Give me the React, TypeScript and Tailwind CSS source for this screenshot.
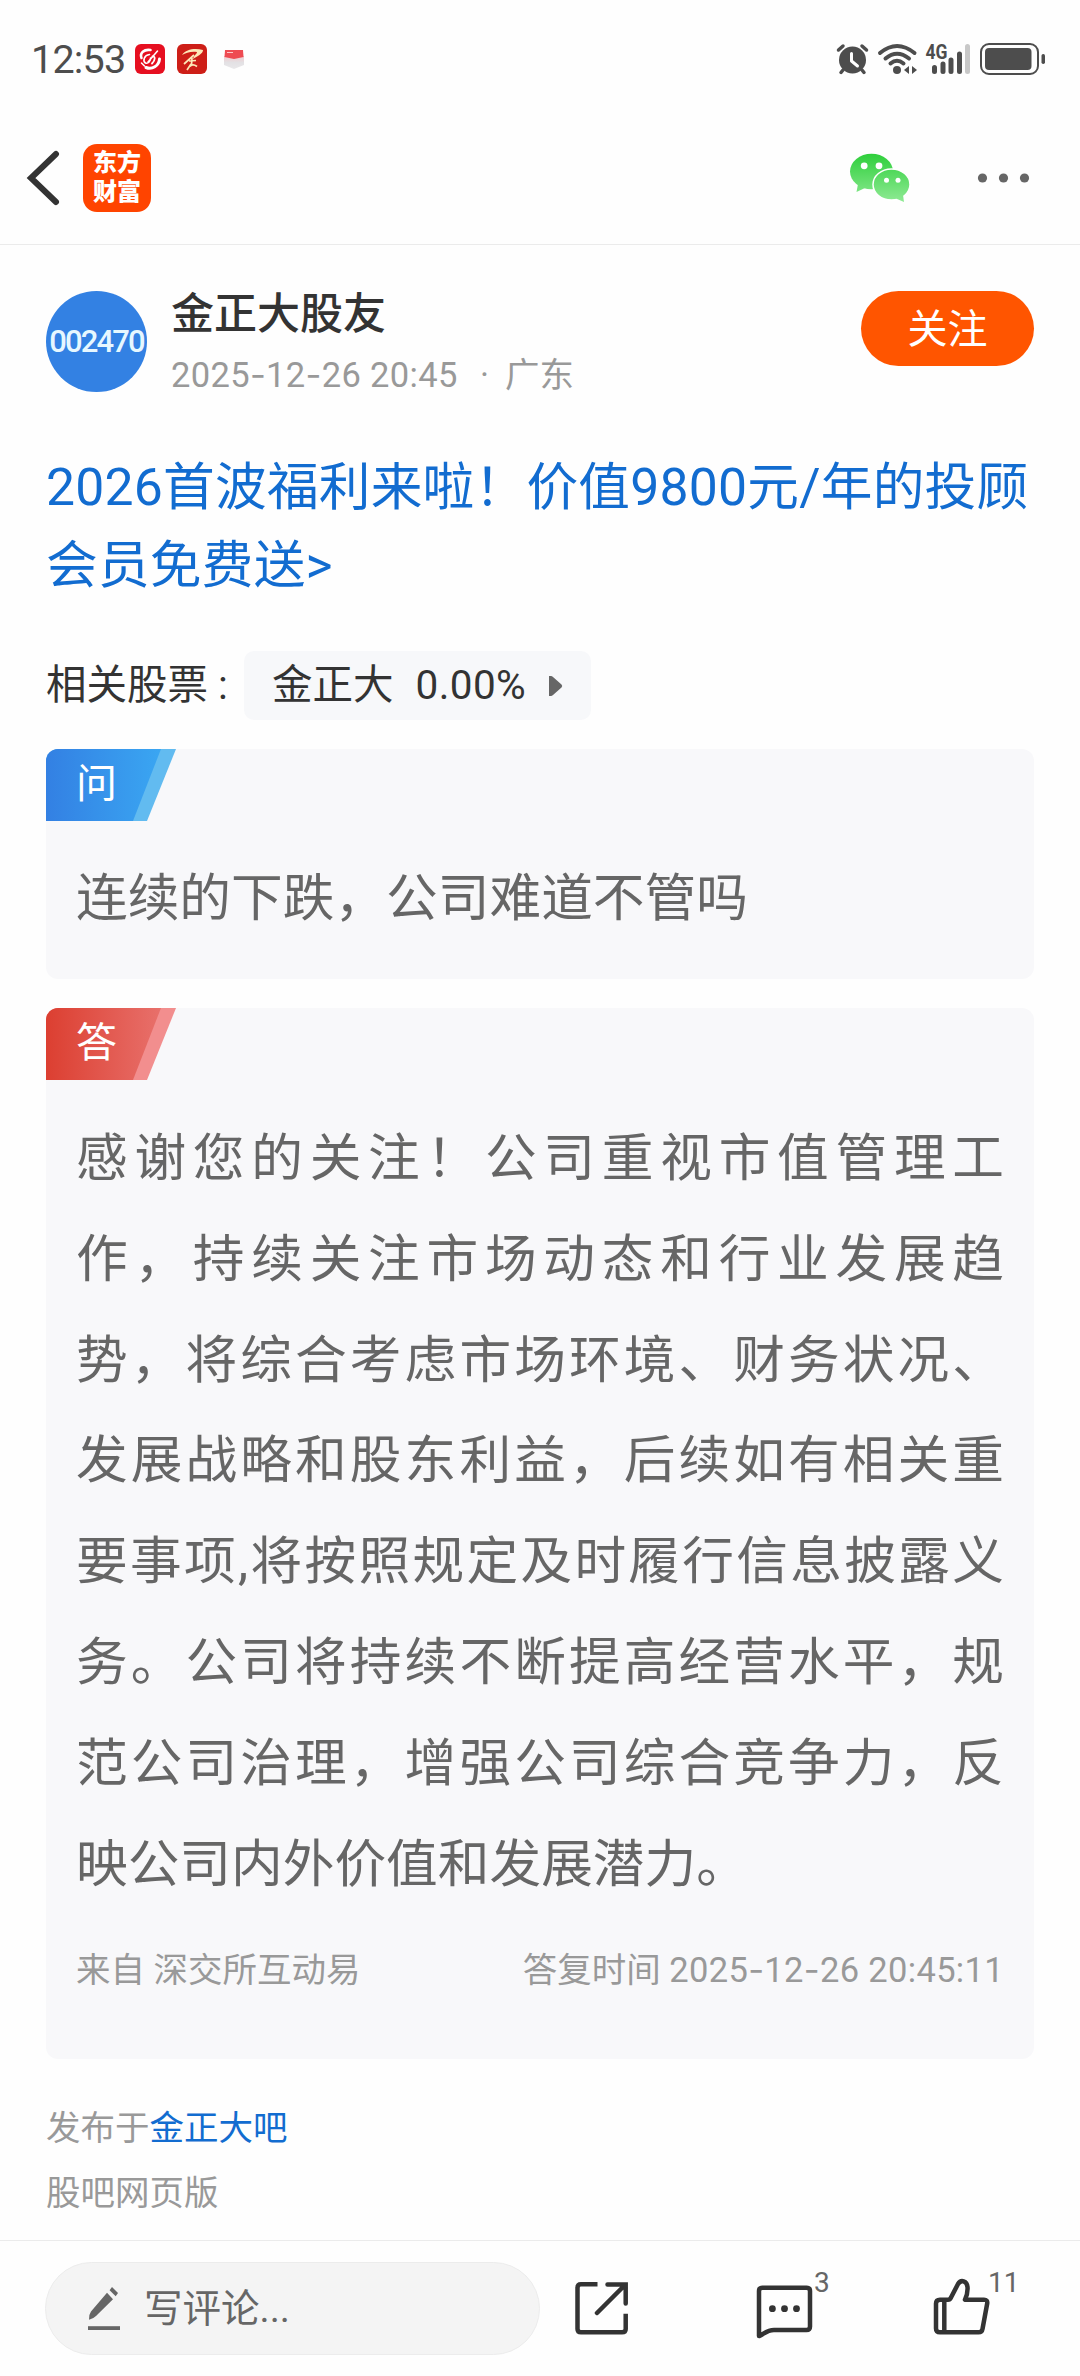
import { ReactNode } from 'react'

const answerLines = [
  '感谢您的关注！公司重视市值管理工',
  '作，持续关注市场动态和行业发展趋',
  '势，将综合考虑市场环境、财务状况、',
  '发展战略和股东利益，后续如有相关重',
  '要事项,将按照规定及时履行信息披露义',
  '务。公司将持续不断提高经营水平，规',
  '范公司治理，增强公司综合竞争力，反',
]

export default function App() {
  return (
    <div className="w-[1080px] h-[2376px] flex flex-col bg-[#fefefe] overflow-hidden text-[#333] whitespace-nowrap [text-spacing-trim:space-all] font-[Roboto,'Noto_Sans_CJK_SC',sans-serif]">
      <StatusBar />

      {/* HEADER */}
      <header className="h-[127px] shrink-0 flex items-center border-b border-[#ebebeb] pl-[22px] pr-[48px] pb-[6px]">
        <svg width="38" height="60" viewBox="0 0 38 60" fill="none" stroke="#333" strokeWidth="6">
          <path d="M34 6 L9 30 L34 54" strokeLinecap="round" strokeLinejoin="miter" />
        </svg>
        <div className="ml-[23px] size-[68px] rounded-[14px] bg-[#ff4400] flex flex-col items-center justify-center text-white font-black text-[24px] leading-[29px]">
          <span>东方</span>
          <span>财富</span>
        </div>
        <WechatIcon />
        <svg className="ml-[61px]" width="60" height="20" viewBox="0 0 60 20" fill="#666">
          <circle cx="10.5" cy="10" r="4.6" />
          <circle cx="31.5" cy="10" r="4.6" />
          <circle cx="52.5" cy="10" r="4.6" />
        </svg>
      </header>

      <main className="flex-1 px-[46px]">
        {/* AUTHOR */}
        <section className="flex mt-[46px] h-[101px]">
          <div className="size-[101px] rounded-full bg-[#3381e3] flex items-center justify-center text-[#e6f7ff] text-[31px] font-medium leading-none">
            <span className="tracking-[-1.9px]">002470</span>
          </div>
          <div className="ml-6 flex flex-col">
            <span className="text-[43px] leading-[47px] font-medium">金正大股友</span>
            <span className="mt-[13px] text-[34.5px] leading-[48px] text-[#999] flex">
              <span className="w-[309px]"><DateText value="2025-12-26 20:45" /></span>
              <span className="w-[25px]">·</span>
              <span>广东</span>
            </span>
          </div>
          <button className="ml-auto w-[173px] h-[75px] rounded-full bg-[#ff5500] text-white text-[40px] leading-[78px]">关注</button>
        </section>

        <h1 className="mt-[57px] text-[51.7px] leading-[77.5px] tracking-[0.22px] text-[#126cd0]">
          2026首波福利来啦！价值9800元/年的投顾
          <br />
          会员免费送&gt;
        </h1>

        {/* RELATED STOCK */}
        <div className="mt-[46px] flex items-center text-[40.5px] leading-[71px]">
          <span className="w-[198px]">相关股票 :</span>
          <span className="w-[347px] h-[69px] rounded-[10px] bg-[#f7f8fa] flex items-center pl-[28px]">
            <span>金正大</span>
            <span className="ml-[22px] tracking-[0.4px]">0.00%</span>
            <svg className="ml-[22px]" width="16" height="22" viewBox="0 0 16 22" fill="#666">
              <path d="M1 1 H3 Q4 1 5 2 L13.500 9.500 Q15 11 13.500 12.500 L5 20 Q4 21 3 21 H1 Z" />
            </svg>
          </span>
        </div>

        {/* QUESTION */}
        <section className="mt-[28px] h-[230px] rounded-xl bg-[#f8f8fa] overflow-hidden">
          <Tag id="ask" from="#3380e3" to="#3aa6f2" edge="#62bbf0">问</Tag>
          <p className="pl-[30px] mt-[38px] text-[51.7px] leading-[80px] text-[#666]">连续的下跌，公司难道不管吗</p>
        </section>

        {/* ANSWER */}
        <section className="mt-[29px] h-[1051px] rounded-xl bg-[#f8f8fa] overflow-hidden">
          <Tag id="reply" from="#dc3f31" to="#e8706b" edge="#f28e8e">答</Tag>
          <div className="mt-[29px] ml-[30px] w-[928px] text-[51.7px] leading-[100.8px] text-[#666]">
            {answerLines.map((line) => (
              <p key={line} className="text-justify [text-align-last:justify]">{line}</p>
            ))}
            <p>映公司内外价值和发展潜力。</p>
          </div>
          <div className="mt-[30px] px-[30px] flex justify-between text-[34.5px] leading-[50px] text-[#999]">
            <span>来自 深交所互动易</span>
            <span>答复时间 <DateText value="2025-12-26 20:45:11" /></span>
          </div>
        </section>

        <div className="mt-[37px] text-[34.5px] leading-[64.6px] text-[#999]">
          <p>发布于<span className="text-[#126cd0]">金正大吧</span></p>
          <p>股吧网页版</p>
        </div>
      </main>

      <BottomBar />
    </div>
  )
}

function DateText({ value }: { value: string }) {
  return (
    <span className="tracking-[0.33px]">
      {value.split('-').map((part, i) => (
        <span key={i}>
          {i > 0 && <span className="font-[Inter,sans-serif]">-</span>}
          {part}
        </span>
      ))}
    </span>
  )
}

function Tag({ id, from, to, edge, children }: { id: string; from: string; to: string; edge: string; children: ReactNode }) {
  return (
    <div className="relative w-[130px] h-[72px]">
      <svg className="absolute inset-0" width="130" height="72" viewBox="0 0 130 72">
        <defs>
          <linearGradient id={id}>
            <stop offset="0" stopColor={from} />
            <stop offset="1" stopColor={to} />
          </linearGradient>
        </defs>
        <path d="M0 0 H130 L101 72 H0 Z" fill={edge} />
        <path d="M0 0 H115 L87 72 H0 Z" fill={`url(#${id})`} />
      </svg>
      <span className="relative block pl-[30px] text-[41px] leading-[71px] text-white">{children}</span>
    </div>
  )
}

function StatusBar() {
  return (
    <div className="h-[118px] shrink-0 flex items-center pl-[31px] pr-[34px] text-[#4d4d4d]">
      <span className="w-[104px] pt-px text-[39.5px] leading-10 tracking-[-0.8px]">12:53</span>
      <svg width="30" height="30" viewBox="0 0 30 30">
        <rect width="30" height="30" rx="6" fill="#e60f20" />
        <g fill="none" stroke="#fff" strokeLinecap="round">
          <path d="M15.500 6 C9 5 4.500 9 6.500 14" strokeWidth="2.600" />
          <path d="M11 23.500 C17 26 24 22 24.500 15" strokeWidth="3" />
          <path d="M22.500 7 L13 18 M14.500 10.500 C9 11 7.500 17 10.500 19 C13 20 16 17 15.500 14" strokeWidth="1.600" />
          <path d="M17.500 12.500 C20.500 12 20.500 16 17 19.500" strokeWidth="1.800" />
          <path d="M6.500 19 L9.500 22" strokeWidth="1.500" />
        </g>
      </svg>
      <svg className="ml-3" width="30" height="30" viewBox="0 0 30 30">
        <rect width="30" height="30" rx="6" fill="#cd1e17" />
        <path d="M5 11 C9 5 18 4 26 6 C26 10 20 12 16 15 C17 11 20 10 20 8 C14 7 9 9 5 11 Z" fill="#fde8b8" />
        <path d="M17 11 L7 20 M12 17 L19 16.500 M15 14 L14.500 21 M10 26 L14 20 M13 22.500 C15 20 18 21 20 22.500" fill="none" stroke="#fde8b8" strokeWidth="1.700" />
      </svg>
      <svg className="ml-[17px]" width="20" height="19" viewBox="0 0 20 19">
        <defs>
          <linearGradient id="box" x1="0" y1="0" x2="0" y2="1">
            <stop offset="0" stopColor="#f3c9cc" />
            <stop offset="0.500" stopColor="#e3e1e4" />
            <stop offset="1" stopColor="#e9e8ea" />
          </linearGradient>
        </defs>
        <path d="M0 6 H20 V15 L10 19 L0 15 Z" fill="url(#box)" />
        <path d="M1 0 H19 L19.500 7 L10 9 L0.500 7 Z" fill="#ee4b52" />
        <path d="M3 2.5 H9" stroke="#ffc9c9" strokeWidth="1" />
      </svg>

      <svg className="ml-auto overflow-visible" width="210" height="34" viewBox="836 42 210 34">
        {/* alarm */}
        <circle cx="852.5" cy="60" r="13.5" fill="#4d4d4d" />
        <path d="M838.500 50 L843 46 M866.500 50 L862 46 M843 70 L841 72.500 M862 70 L864 72.500" stroke="#4d4d4d" strokeWidth="3.500" strokeLinecap="round" />
        <path d="M851.500 53.500 V61 L857.500 66" fill="none" stroke="#fff" strokeWidth="3" strokeLinecap="round" strokeLinejoin="round" />
        {/* wifi */}
        <g fill="none" stroke="#4d4d4d" strokeWidth="4" strokeLinecap="round">
          <path d="M880 53 Q897 39 914.500 53" />
          <path d="M885.500 58.500 Q897 49 909 58.500" />
          <path d="M890.500 63.500 Q897 58 903.500 63.500" />
        </g>
        <circle cx="897" cy="70" r="4" fill="#4d4d4d" />
        <path d="M904 70 L909 66 V74 Z M917 70 L912 66 V74 Z" fill="#4d4d4d" />
        {/* signal */}
        <text x="925.500" y="58.500" fontSize="20" fontWeight="700" fill="#4d4d4d" textLength="22" lengthAdjust="spacingAndGlyphs">4G</text>
        <g stroke="#4d4d4d" strokeWidth="5" strokeLinecap="round">
          <path d="M934.500 67.500 V71.500 M943 64 V71.500 M951 60 V71.500 M959.500 54 V71.500" />
          <path d="M967.500 46.500 V71.500" stroke="#c8c8c8" />
        </g>
        {/* battery */}
        <rect x="981" y="44" width="57" height="30" rx="8" fill="none" stroke="#4d4d4d" strokeWidth="2" />
        <rect x="985" y="48" width="46.500" height="22" rx="4" fill="#4d4d4d" />
        <rect x="1041.500" y="54" width="3.500" height="10" rx="1.700" fill="#4d4d4d" />
      </svg>
    </div>
  )
}

function WechatIcon() {
  return (
    <svg className="ml-auto" width="62" height="52" viewBox="848 151 62 52">
      <defs>
        <linearGradient id="wechat" gradientUnits="userSpaceOnUse" x1="0" y1="153" x2="0" y2="201">
          <stop offset="0" stopColor="#2fcf3c" />
          <stop offset="1" stopColor="#8fea94" />
        </linearGradient>
      </defs>
      <g fill="url(#wechat)">
        <ellipse cx="870.500" cy="170.500" rx="21.500" ry="17.800" />
        <path d="M857 183 L855.500 191 L865 186.500 Z" />
        <ellipse cx="890.500" cy="183.500" rx="18.500" ry="15.500" stroke="#fff" strokeWidth="1.500" />
        <path d="M895 197.500 L903 201 L902 194 Z" />
      </g>
      <g fill="#fff">
        <circle cx="863.200" cy="164.800" r="3.400" />
        <circle cx="878" cy="164.800" r="3.400" />
        <circle cx="885.500" cy="179.300" r="2.500" />
        <circle cx="897" cy="179.300" r="2.500" />
      </g>
    </svg>
  )
}

function BottomBar() {
  return (
    <footer className="h-[136px] shrink-0 border-t border-[#ebebeb] flex items-start pt-[21px] pl-[45px]">
      <div className="w-[495px] h-[93px] rounded-full bg-[#f4f4f4] border border-[#ececec] flex items-center pl-[38px] text-[38.5px] text-[#666]">
        <svg width="40" height="48" viewBox="0 0 40 48" fill="#666">
          <path d="M23 7.700 L29 14.300 L12 31 Q9 34 5 34.700 Q4.500 30 7 26.500 Z" />
          <path d="M28 2 L34 8 L31.700 11.300 L25.600 5.300 Z" />
          <rect x="4" y="41.200" width="32" height="3.800" />
        </svg>
        <span className="ml-[20px] leading-[58px]">写评论...</span>
      </div>
      <svg className="ml-8 mt-4" width="60" height="60" viewBox="0 0 60 60" fill="none" stroke="#333" strokeWidth="4.500">
        <path d="M25.500 6.300 H9 Q5.500 6.300 5.500 9.800 V51 Q5.500 54.300 9 54.300 H50 Q53.700 54.300 53.700 51 V35.700" />
        <path d="M35.500 6.500 H53.700 V25.500 M53 7 L25 35" strokeLinecap="round" />
      </svg>
      <svg className="ml-[122px] mt-5" width="60" height="60" viewBox="0 0 60 60" fill="none" stroke="#333" strokeWidth="4.500" strokeLinejoin="round">
        <path d="M5 54 V9 Q5 5.700 8.500 5.700 H52.500 Q56 5.700 56 9 V44.500 Q56 48 52.500 48 H20 C13 48 10 52 5.500 54 Z" />
        <g fill="#333" stroke="none">
          <circle cx="18.400" cy="26.700" r="3.400" />
          <circle cx="30.500" cy="26.700" r="3.400" />
          <circle cx="42.500" cy="26.700" r="3.400" />
        </g>
      </svg>
      <span className="w-[117px] mt-1 text-[28px] leading-[34px] text-[#666]">3</span>
      <svg className="mt-[14px]" width="60" height="60" viewBox="0 0 60 60" fill="none" stroke="#333" strokeWidth="4.500" strokeLinejoin="round">
        <path d="M9 23.700 H17 Q19 23.700 20 21.500 L27 8 C30 3 36 5 36.500 11 Q37 17 34 23.700 H53 Q56.800 23.700 56.200 27.500 L51.500 53 Q51 56.300 47.500 56.300 H9 Q5 56.300 5 52.500 V27.500 Q5 23.700 9 23.700 Z" />
        <path d="M13.300 23.700 V56.300" />
      </svg>
      <span className="mt-1 ml-[-3px] text-[28px] leading-[34px] text-[#666]">11</span>
    </footer>
  )
}
